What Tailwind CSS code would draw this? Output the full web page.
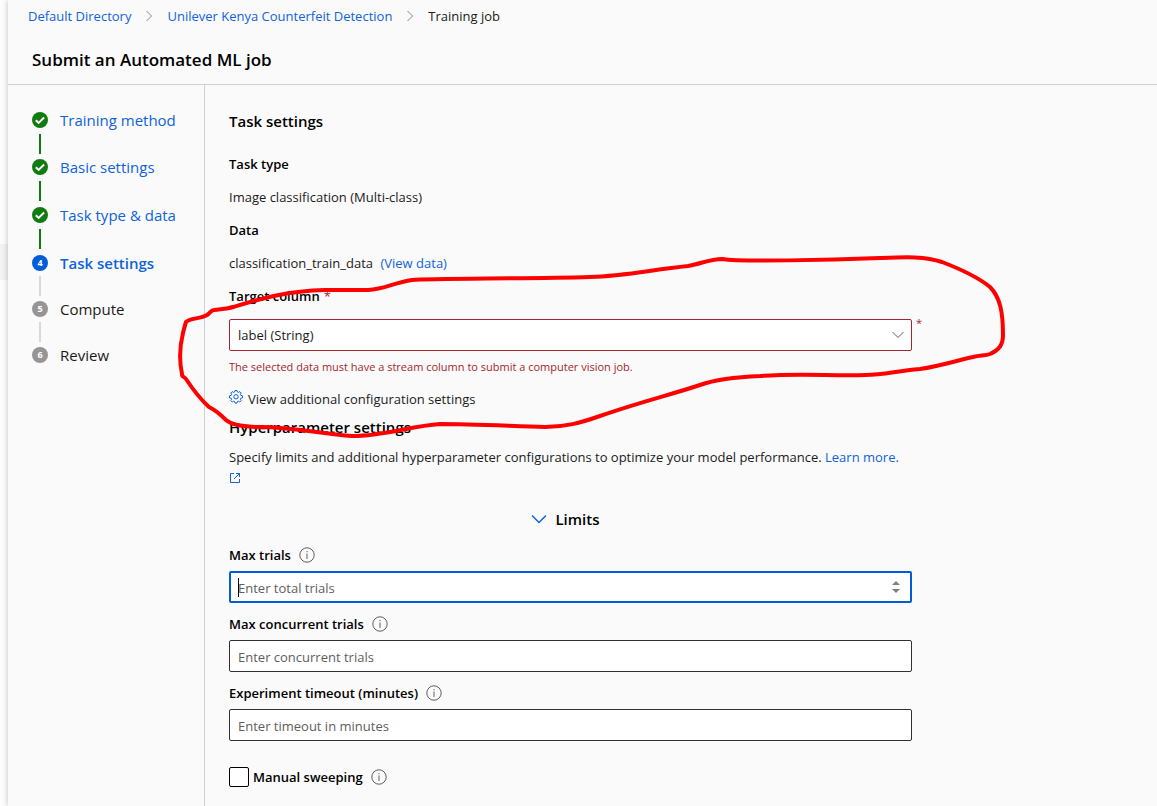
<!DOCTYPE html>
<html lang="en">
  <head>
    <meta charset="UTF-8" />
    <meta name="viewport" content="width=device-width, initial-scale=1.0" />
    <title>Submit an Automated ML job</title>
    <script src="https://cdn.jsdelivr.net/npm/@tailwindcss/browser@4"></script>
  </head>
  <body class="bg-[#fdfdfd] font-['Open_Sans',sans-serif] text-[13px] leading-5 text-[#1b1a19]">
    <div class="relative flex min-h-screen overflow-hidden">
      <!-- Edge of the page behind the panel -->
      <div class="w-2 shrink-0 pt-[244px]">
        <div class="h-9 bg-[#f3f3f3]"></div>
      </div>

      <div class="flex grow flex-col bg-[#fafafa] shadow-[0_0_6px_rgba(0,0,0,0.25)]">
        <header class="border-b border-[#d2d0ce]">
          <nav aria-label="Breadcrumb" class="px-5 pt-[6px]">
            <ol class="flex items-center">
              <li><a href="#" class="text-[#1062db]">Default Directory</a></li>
              <li class="px-[14px]">
                <svg class="h-3 w-2" viewBox="0 0 8 12" fill="none" stroke="#8a8886"><path d="M1.5 1l5 5-5 5" /></svg>
              </li>
              <li><a href="#" class="text-[#1062db]">Unilever Kenya Counterfeit Detection</a></li>
              <li class="px-[14px]">
                <svg class="h-3 w-2" viewBox="0 0 8 12" fill="none" stroke="#8a8886"><path d="M1.5 1l5 5-5 5" /></svg>
              </li>
              <li aria-current="page">Training job</li>
            </ol>
          </nav>
          <h1 class="px-6 pt-[22px] pb-3 text-[17px] leading-6 font-semibold text-black">Submit an Automated ML job</h1>
        </header>

        <div class="flex grow">
          <!-- Steps -->
          <nav aria-label="Steps" class="w-[197px] shrink-0 border-r border-[#d2d0ce] px-6 pt-[27px] text-[15px]">
            <ol>
              <li class="flex h-[47px] gap-3">
                <div class="flex w-4 flex-col items-center gap-[6px]">
                  <svg class="h-4 w-4" viewBox="0 0 16 16"><circle cx="8" cy="8" r="8" fill="#107c10" /><path d="M3.8 8.2l2.8 2.7 5.5-5.4" fill="none" stroke="#fff" stroke-width="2" /></svg>
                  <div class="h-5 w-[2px] bg-[#107c10]"></div>
                </div>
                <a href="#" class="leading-4 text-[#1062db]">Training method</a>
              </li>
              <li class="flex h-12 gap-3">
                <div class="flex w-4 flex-col items-center gap-[6px]">
                  <svg class="h-4 w-4" viewBox="0 0 16 16"><circle cx="8" cy="8" r="8" fill="#107c10" /><path d="M3.8 8.2l2.8 2.7 5.5-5.4" fill="none" stroke="#fff" stroke-width="2" /></svg>
                  <div class="h-5 w-[2px] bg-[#107c10]"></div>
                </div>
                <a href="#" class="leading-4 text-[#1062db]">Basic settings</a>
              </li>
              <li class="flex h-12 gap-3">
                <div class="flex w-4 flex-col items-center gap-[6px]">
                  <svg class="h-4 w-4" viewBox="0 0 16 16"><circle cx="8" cy="8" r="8" fill="#107c10" /><path d="M3.8 8.2l2.8 2.7 5.5-5.4" fill="none" stroke="#fff" stroke-width="2" /></svg>
                  <div class="h-5 w-[2px] bg-[#107c10]"></div>
                </div>
                <a href="#" class="leading-4 whitespace-nowrap text-[#1062db]">Task type &amp; data</a>
              </li>
              <li class="flex h-[46px] gap-3" aria-current="step">
                <div class="flex w-4 flex-col items-center gap-[5px]">
                  <span class="flex h-4 w-4 items-center justify-center rounded-full bg-[#015cda] text-[9px] leading-4 font-bold text-white">4</span>
                  <div class="h-5 w-[2px] bg-[#d8d8d8]"></div>
                </div>
                <a href="#" class="leading-4 font-semibold text-[#1062db]">Task settings</a>
              </li>
              <li class="flex h-[46px] gap-3">
                <div class="flex w-4 flex-col items-center gap-[5px]">
                  <span class="flex h-4 w-4 items-center justify-center rounded-full bg-[#979593] text-[9px] leading-4 font-bold text-white">5</span>
                  <div class="h-5 w-[2px] bg-[#d8d8d8]"></div>
                </div>
                <span class="leading-4">Compute</span>
              </li>
              <li class="flex h-[46px] gap-3">
                <span class="flex h-4 w-4 items-center justify-center rounded-full bg-[#979593] text-[9px] leading-4 font-bold text-white">6</span>
                <span class="leading-4">Review</span>
              </li>
            </ol>
          </nav>

          <main class="grow px-6 pt-6 pb-[19px]">
            <form class="max-w-[683px]">
              <h2 class="text-[15px] leading-6 font-semibold text-black">Task settings</h2>

              <div class="mt-[21px] flex flex-col gap-[13px]">
                <h3 class="font-semibold text-black">Task type</h3>
                <p>Image classification (Multi-class)</p>
                <h3 class="font-semibold text-black">Data</h3>
                <p>classification_train_data <a href="#" class="ml-1 text-[#1062db]">(View data)</a></p>
                <label for="target" class="font-semibold text-black">Target column<span class="ml-1 font-normal text-[#a4262c]">*</span></label>
                <div class="relative">
                  <select id="target" class="block h-8 w-full appearance-none rounded-xs border border-[#a4262c] bg-white px-2 text-[13px]">
                    <option>label (String)</option>
                  </select>
                  <svg class="pointer-events-none absolute top-3 right-2 h-2 w-3" viewBox="0 0 12 8" fill="none" stroke="#605e5c"><path d="M.5 1L6 6.5 11.5 1" /></svg>
                  <span class="absolute -top-1 -right-[10px] text-[11px] leading-4 text-[#a4262c]">*</span>
                </div>
              </div>
              <p class="mt-2 text-[11px] leading-4 text-[#a4262c]">The selected data must have a stream column to submit a computer vision job.</p>

              <button type="button" class="mt-[14px] flex gap-[5px]">
                <svg class="h-4 w-[14px]" viewBox="0 0 14 16" fill="none" stroke="#1062db">
                  <path d="M6 1.5h2l.4 1.5 1 .4 1.4-.8 1.4 1.4-.8 1.4.4 1 1.7.4v2l-1.7.4-.4 1 .8 1.4-1.4 1.4-1.4-.8-1 .4-.4 1.5H6l-.4-1.5-1-.4-1.4.8-1.4-1.4.8-1.4-.4-1L.5 8.8v-2l1.7-.4.4-1L1.8 4l1.4-1.4 1.400.8 1-.4z" />
                  <circle cx="7" cy="7.8" r="2.2" />
                </svg>
                View additional configuration settings
              </button>

              <h2 class="mt-2 text-[15px] leading-5 font-semibold text-black">Hyperparameter settings</h2>
              <p class="mt-[9px] leading-[22px]">
                Specify limits and additional hyperparameter configurations to optimize your model performance.
                <a href="#" class="text-[#1062db]">Learn more.
                  <svg class="inline h-3 w-3 align-baseline" viewBox="0 0 12 12" fill="none" stroke="#1062db"><path d="M5 1.5H1.5v9h9V7M7 1.5h3.5V5M10.5 1.5L5 7" /></svg></a>
              </p>

              <button type="button" class="mx-auto mt-[17px] flex items-center gap-2 pr-[10px] text-[15px] leading-6 font-semibold text-black">
                <svg class="h-[10px] w-4" viewBox="0 0 16 10" fill="none" stroke="#1062db" stroke-width="1.5"><path d="M1 1.5l7 7 7-7" /></svg>
                Limits
              </button>

              <div class="mt-[14px] flex flex-col gap-[11px]">
                <div>
                  <div class="flex items-center gap-2">
                    <label for="trials" class="font-semibold text-black">Max trials</label>
                    <svg class="h-4 w-4" viewBox="0 0 16 16" fill="none" stroke="#605e5c"><circle cx="8" cy="8" r="7.2" /><path d="M8 6.5V12M8 4v1.2" /></svg>
                  </div>
                  <div class="relative mt-[6px]">
                    <input id="trials" type="text" inputmode="numeric" placeholder="Enter total trials" class="block h-8 w-full rounded-xs border-2 border-[#015cda] bg-white px-[7px] pt-[2px] text-[13px] outline-none placeholder:text-[#605e5c]" />
                    <span class="absolute top-[7px] left-[9px] h-[19px] w-px bg-black"></span>
                    <svg class="absolute top-[10px] right-3 h-3 w-2" viewBox="0 0 8 12" fill="#7f7f7f"><path d="M4 0l4 4H0zM4 12L0 8h8z" /></svg>
                  </div>
                </div>
                <div>
                  <div class="flex items-center gap-2">
                    <label for="concurrent" class="font-semibold text-black">Max concurrent trials</label>
                    <svg class="h-4 w-4" viewBox="0 0 16 16" fill="none" stroke="#605e5c"><circle cx="8" cy="8" r="7.2" /><path d="M8 6.5V12M8 4v1.2" /></svg>
                  </div>
                  <input id="concurrent" type="text" inputmode="numeric" placeholder="Enter concurrent trials" class="mt-[6px] block h-8 w-full rounded-xs border border-[#323130] bg-white px-2 pt-[2px] text-[13px] placeholder:text-[#605e5c]" />
                </div>
                <div>
                  <div class="flex items-center gap-2">
                    <label for="timeout" class="font-semibold text-black">Experiment timeout (minutes)</label>
                    <svg class="h-4 w-4" viewBox="0 0 16 16" fill="none" stroke="#605e5c"><circle cx="8" cy="8" r="7.2" /><path d="M8 6.5V12M8 4v1.2" /></svg>
                  </div>
                  <input id="timeout" type="text" inputmode="numeric" placeholder="Enter timeout in minutes" class="mt-[6px] block h-8 w-full rounded-xs border border-[#323130] bg-white px-2 pt-[2px] text-[13px] placeholder:text-[#605e5c]" />
                </div>
              </div>

              <div class="mt-[26px] flex items-center">
                <input id="sweeping" type="checkbox" class="h-5 w-5 appearance-none rounded-xs border border-black bg-white" />
                <label for="sweeping" class="ml-1 font-semibold text-black">Manual sweeping</label>
                <svg class="ml-2 h-4 w-4" viewBox="0 0 16 16" fill="none" stroke="#605e5c"><circle cx="8" cy="8" r="7.2" /><path d="M8 6.5V12M8 4v1.2" /></svg>
              </div>
            </form>
          </main>
        </div>
      </div>

      <!-- Hand-drawn red mark around the target column -->
      <svg class="pointer-events-none absolute top-0 left-0 h-[806px] w-[1157px]" viewBox="0 0 1157 806" fill="none" stroke="#fe0000" stroke-width="4" stroke-linejoin="round" stroke-linecap="round">
        <path d="M186 322C190 318 200 319 207 315C210 313 211 310 214 310C220 309 227 309 233 307C260 299 285 291 325 290H368C385 289 393 283 412 280C430 278 520 279 590 277C625 276 650 270 688 266C700 264 710 259 722 259C740 262 830 260 880 258C905 257 925 256 942 262C955 267 978 277 990 287C1000 297 1003 312 1003 335C1003 345 999 350 990 354C985 356 980 355 973 357C955 361 940 366 920 369C895 371 885 375 865 375C830 376 800 373 760 376C735 377 714 380 700 385C670 395 640 402 600 416C580 423 565 427 545 427C510 426 470 424 440 424C410 426 385 436 352 436C320 434 290 426 255 427C240 426 232 425 226 420C220 414 215 410 209 407C200 399 192 388 186 379C184 376 182 378 182 374C179 360 180 345 183 333C184 329 185 325 186 322Z" />
      </svg>
    </div>
  </body>
</html>
